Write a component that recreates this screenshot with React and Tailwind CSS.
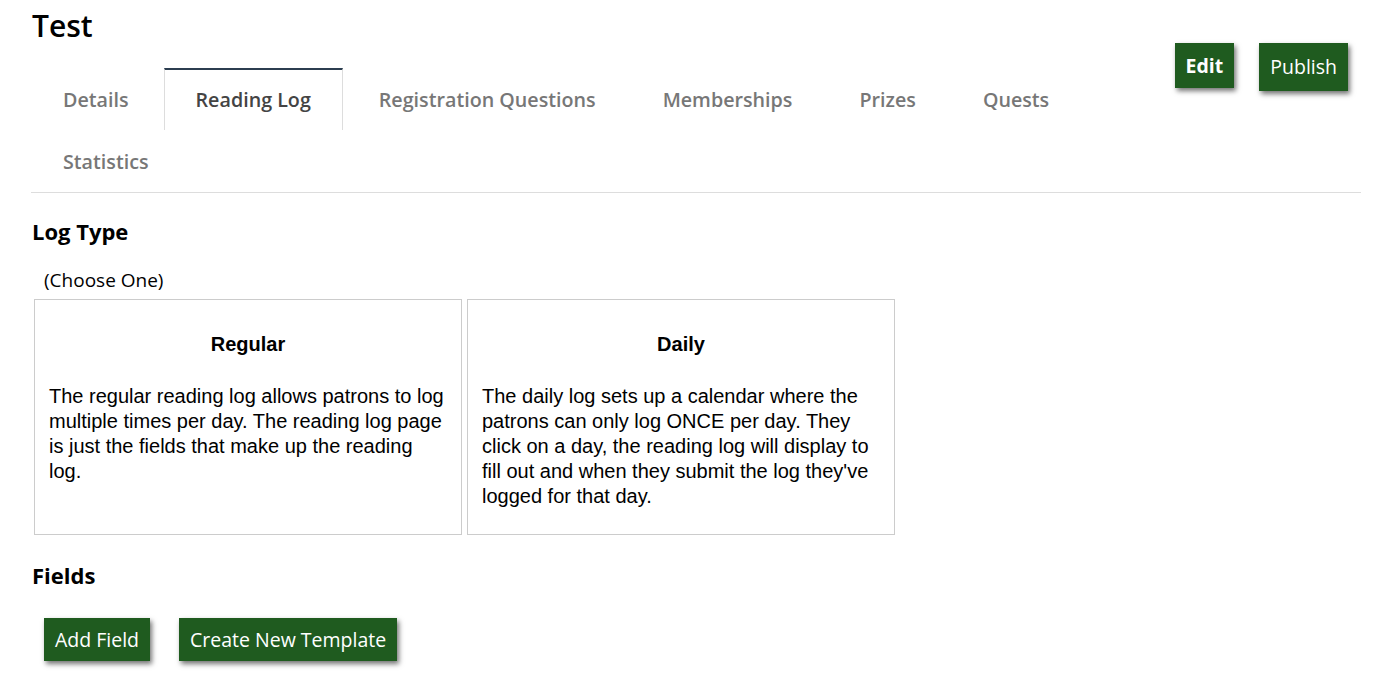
import React from "react";

const tabs = [
  "Details",
  "Reading Log",
  "Registration Questions",
  "Memberships",
  "Prizes",
  "Quests",
  "Statistics",
];

const logTypes = [
  {
    title: "Regular",
    text: "The regular reading log allows patrons to log multiple times per day. The reading log page is just the fields that make up the reading log.",
  },
  {
    title: "Daily",
    text: "The daily log sets up a calendar where the patrons can only log ONCE per day. They click on a day, the reading log will display to fill out and when they submit the log they've logged for that day.",
  },
];

const GreenButton = ({ children, className = "" }) => (
  <button
    className={
      "bg-[#1f5b1f] text-white text-[19.5px] shadow-[2px_3px_5px_rgba(0,0,0,0.55)] " +
      className
    }
  >
    {children}
  </button>
);

const App = () => {
  const active = "Reading Log";

  return (
    <div className="min-h-[695px] bg-white font-['Open_Sans',sans-serif] text-black">
      <div className="ml-[31px] mr-[13px] border-b border-[#dddddd]">
        <div className="flex justify-between">
          {/* title + tabs */}
          <div className="w-[1110px]">
            <h1 className="pt-[6px] pl-[1px] text-[30px] leading-[40px] font-semibold">
              Test
            </h1>
            <ul className="mt-[22px] flex flex-wrap">
              {tabs.map((tab) => (
                <li
                  key={tab}
                  className={
                    tab === active
                      ? "mr-[4px] flex h-[62px] items-center border-x border-t-2 border-x-[#dddddd] border-t-[#2c3e50] px-[31px] text-[19.7px] font-semibold text-[#444]"
                      : "mr-[3px] flex h-[62px] items-center border-t-2 border-transparent px-[32px] text-[19.7px] font-semibold text-[#777]"
                  }
                >
                  {tab}
                </li>
              ))}
            </ul>
          </div>

          {/* actions */}
          <div className="flex items-start gap-[25px] pt-[43px] pr-[13px]">
            <GreenButton className="h-[45px] px-[11px] font-bold">Edit</GreenButton>
            <GreenButton className="h-[48px] px-[11px]">Publish</GreenButton>
          </div>
        </div>
      </div>

      <div className="px-[32px]">
        <h2 className="mt-[23px] text-[22px] leading-[30px] font-bold">Log Type</h2>

        <p className="mt-[22px] pl-[12px] text-[19px] leading-[24px]">(Choose One)</p>

        <div className="mt-[7px] ml-[2px] flex gap-[5px]">
          {logTypes.map((lt) => (
            <div
              key={lt.title}
              className="h-[236px] w-[428px] border border-[#cccccc] px-[14px] pt-[30px] font-['Liberation_Sans',Arial,sans-serif]"
            >
              <h3 className="text-center text-[20px] leading-[28px] font-bold">
                {lt.title}
              </h3>
              <p className="mt-[26px] text-[20px] leading-[25px]">{lt.text}</p>
            </div>
          ))}
        </div>

        <h2 className="mt-[25px] text-[22px] leading-[30px] font-bold">Fields</h2>

        <div className="mt-[28px] flex gap-[29px] pl-[12px]">
          <GreenButton className="h-[43px] px-[11px]">Add Field</GreenButton>
          <GreenButton className="h-[43px] px-[11px]">Create New Template</GreenButton>
        </div>
      </div>
    </div>
  );
};

export default App;
